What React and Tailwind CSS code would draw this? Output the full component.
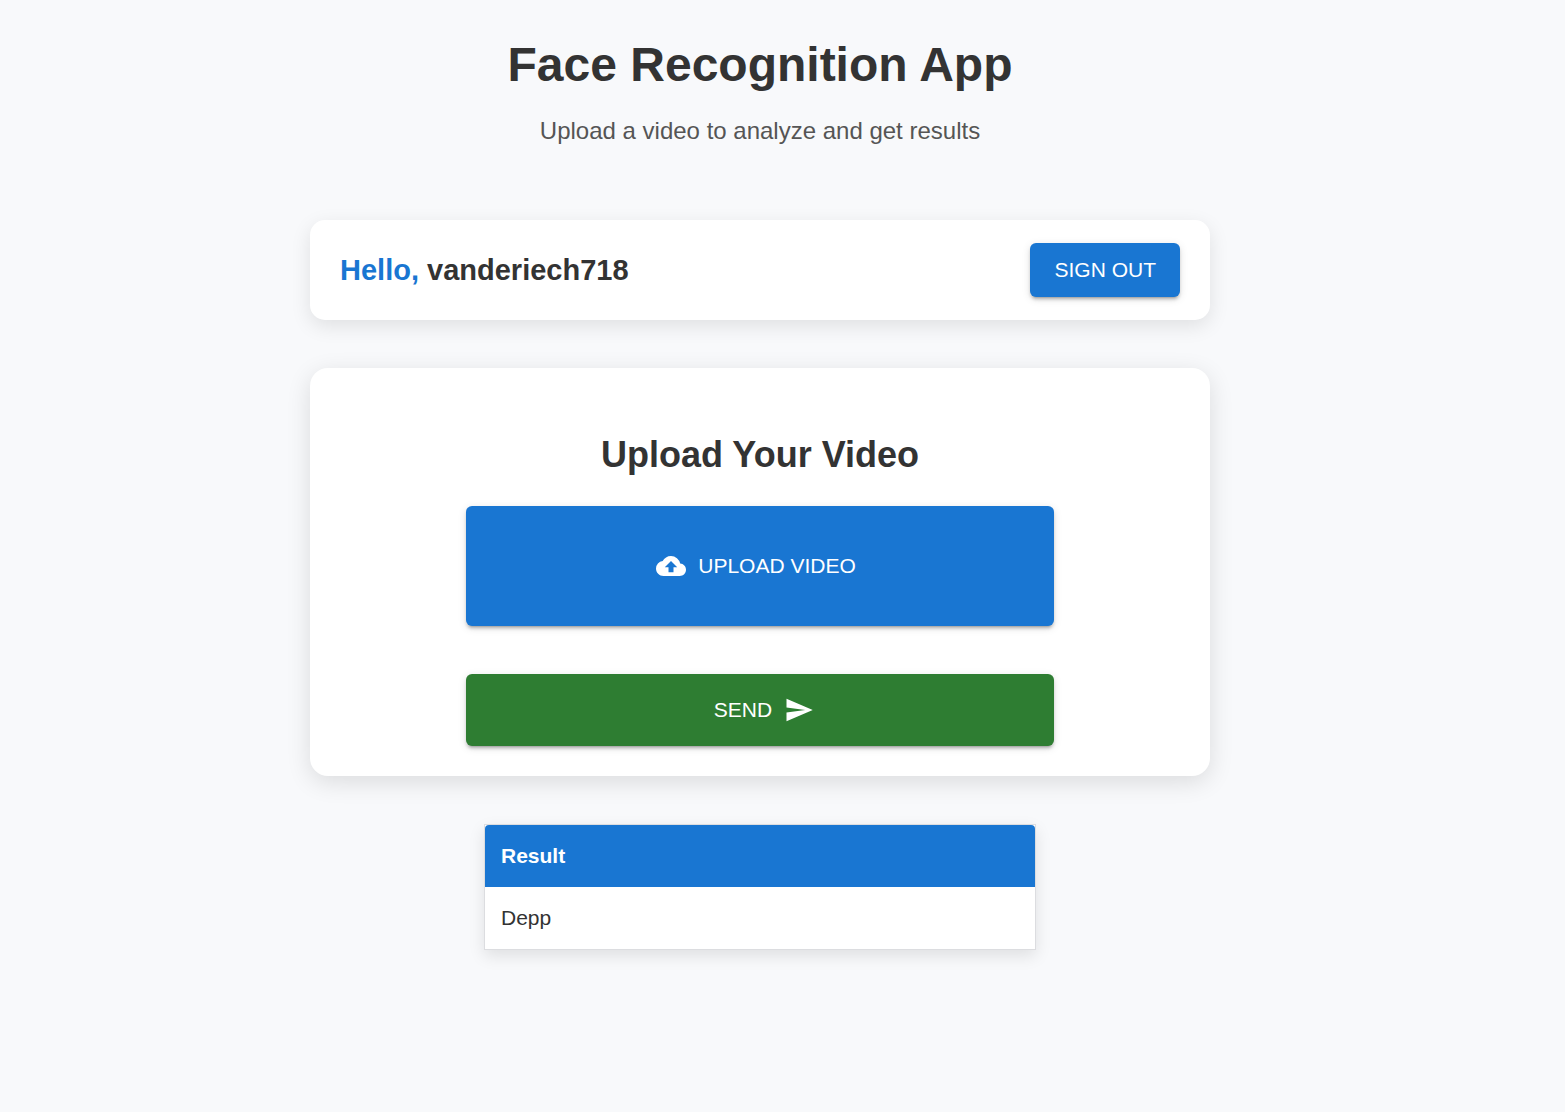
import React from "react";
import { MdCloudUpload, MdSend } from "react-icons/md";

const raised = "shadow-[0_4px_2px_-3px_rgba(0,0,0,0.2),0_3px_3px_0_rgba(0,0,0,0.14),0_2px_8px_0_rgba(0,0,0,0.12)]";

export default function App() {
  return (
    <div className="min-h-screen bg-[#f8f9fb] pr-[45px] font-['Liberation_Sans',Arial,sans-serif] text-[#333]">
      <main className="mx-auto flex max-w-[900px] flex-col items-center gap-12 pb-12">
        <header className="pt-[37px] pb-[23px] text-center">
          <h1 className="text-[48px] leading-[56px] font-bold">Face Recognition App</h1>
          <p className="mt-5 text-[24px] leading-9 text-[#555]">Upload a video to analyze and get results</p>
        </header>

        <section className="flex w-full items-center justify-between rounded-[15px] bg-white px-[30px] py-[23px] shadow-[0_6px_20px_rgba(0,0,0,0.1)]">
          <h2 className="text-[29px] leading-9 font-bold">
            <span className="text-[#1976d2]">Hello,</span> vanderiech718
          </h2>
          <button type="button" className={`rounded-md bg-[#1976d2] px-6 py-[9px] text-[21px] leading-9 text-white ${raised}`}>
            SIGN OUT
          </button>
        </section>

        <section className="flex w-full flex-col items-center rounded-[18px] bg-white px-[30px] pt-16 pb-[30px] shadow-[0_6px_24px_rgba(0,0,0,0.12)]">
          <h2 className="text-[36px] leading-[46px] font-bold">Upload Your Video</h2>
          <button type="button" className={`mt-7 flex h-[120px] w-[70%] items-center justify-center gap-3 rounded-md bg-[#1976d2] text-[21px] text-white ${raised}`}>
            <MdCloudUpload size={30} className="-ml-2" />
            UPLOAD VIDEO
          </button>
          <button type="button" className={`mt-12 flex h-[72px] w-[70%] items-center justify-center gap-3 rounded-md bg-[#2e7d32] text-[21px] text-white ${raised}`}>
            SEND
            <MdSend size={30} className="-mr-2" />
          </button>
        </section>

        <div className="w-full max-w-[552px] border border-[#dcdde0] bg-white shadow-[0_6px_15px_rgba(0,0,0,0.1)]">
          <table className="w-full border-separate border-spacing-0 text-left text-[21px] leading-[30px]">
            <thead>
              <tr><th scope="col" className="rounded-t bg-[#1976d2] px-4 py-4 font-bold text-white">Result</th></tr>
            </thead>
            <tbody>
              <tr><td className="px-4 py-4">Depp</td></tr>
            </tbody>
          </table>
        </div>
      </main>
    </div>
  );
}
